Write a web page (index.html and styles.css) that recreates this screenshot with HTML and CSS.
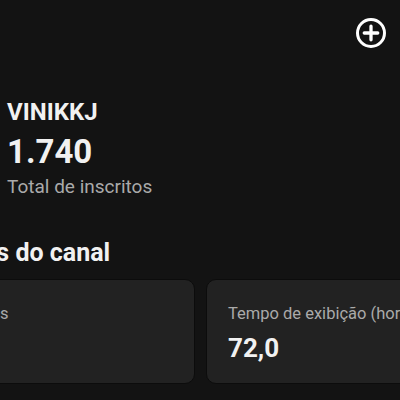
FILE: index.html
```html
<!DOCTYPE html>
<html lang="pt-BR">
	<head>
		<meta charset="UTF-8" />
		<meta name="viewport" content="width=device-width, initial-scale=1.0" />
		<title>Painel do canal</title>
		<link rel="stylesheet" href="styles.css">
	</head>
	<body>
		<div class="top-bar">
			<button type="button" class="add-button" aria-label="Criar">
				<svg viewBox="0 0 24 24" width="36" height="36">
					<circle cx="12" cy="12" r="9" fill="none" stroke="#fff" stroke-width="2" />
					<path d="M12 7.5v9M7.5 12h9" stroke="#fff" stroke-width="2.2" stroke-linecap="round" />
				</svg>
			</button>
		</div>

		<div class="channel-info">
			<div class="channel-name">VINIKKJ</div>
			<div class="subscriber-count">1.740</div>
			<div class="subscriber-label">Total de inscritos</div>
		</div>

		<div class="stats-section">
			<h2>Estatísticas do canal</h2>
			<div class="stats-row">
				<div class="stat-card">
					<div class="stat-label">Visualizações</div>
					<div class="stat-value">3.215</div>
				</div>
				<div class="stat-card">
					<div class="stat-label">Tempo de exibição (horas)</div>
					<div class="stat-value">72,0</div>
				</div>
			</div>
		</div>
	</body>
</html>
```

FILE: styles.css
```css
/* General styling */
body {
	font-family: Roboto, "Liberation Sans", sans-serif;
	margin: 0;
	padding: 0;
	background-color: #131313;
	color: #f1f1f1;
	width: 400px;
	height: 400px;
	overflow: hidden;
}

/* Top bar with create button */
.top-bar {
	display: flex;
	justify-content: flex-end;
	padding: 15px 11px 0 0;
}
.add-button {
	background: none;
	border: none;
	padding: 0;
	width: 36px;
	height: 36px;
	cursor: pointer;
}
.add-button svg {
	display: block;
}

/* Channel summary */
.channel-info {
	padding: 47px 0 0 7px;
}
.channel-name {
	font-size: 24px;
	line-height: 28px;
	font-weight: 700;
}
.subscriber-count {
	font-size: 33px;
	line-height: 40px;
	font-weight: 700;
	margin-top: 6px;
}
.subscriber-label {
	font-size: 19px;
	line-height: 24px;
	color: #aaaaaa;
	margin-top: 3px;
}

/* Channel stats, scrolled past the left edge */
.stats-section {
	margin-left: -115px;
	padding-top: 40px;
}
.stats-section h2 {
	font-size: 25px;
	line-height: 28px;
	font-weight: 700;
	margin: 0 0 12px;
	text-indent: -7px;
}
.stats-row {
	display: flex;
	gap: 11px;
}
.stat-card {
	flex-shrink: 0;
	width: 310px;
	height: 105px;
	box-sizing: border-box;
	padding: 24px 21px 0;
	background-color: #222222;
	border: 1px solid #0c0c0c;
	border-radius: 10px;
	white-space: nowrap;
}
.stat-label {
	font-size: 16.5px;
	line-height: 20px;
	color: #aaaaaa;
}
.stat-value {
	font-size: 26px;
	line-height: 32px;
	font-weight: 700;
	margin-top: 8px;
}
```
